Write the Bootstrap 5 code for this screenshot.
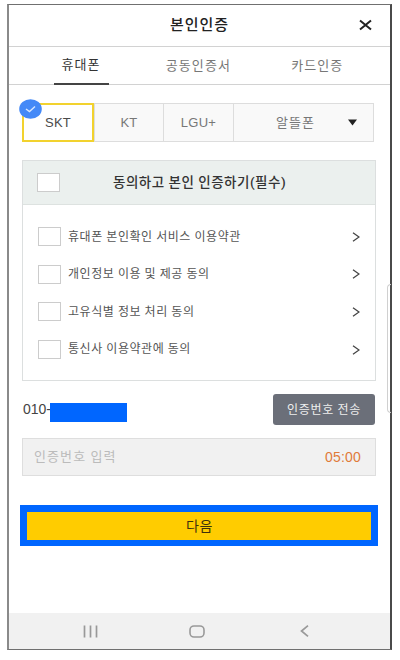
<!DOCTYPE html>
<html lang="ko">
<head>
<meta charset="utf-8">
<meta name="viewport" content="width=device-width, initial-scale=1">
<title>본인인증</title>
<link href="https://cdn.jsdelivr.net/npm/bootstrap@5.3.0/dist/css/bootstrap.min.css" rel="stylesheet">
<style>
body{background:#fff;font-family:Roboto,"Noto Sans CJK KR",sans-serif;color:#333;line-height:1.2;overflow:hidden}
svg{display:block;flex:none}
.phone{width:385px;height:646px;margin:4px 0 0 7px;border:1px solid #707070;border-left:2px solid #8a8a8a;border-right:2px solid #4a4a4a}
.topbar{height:42px;border-bottom:1px solid #d2d2d2}
.topbar h1{font-size:15px;font-weight:500;letter-spacing:.95px;color:#222;padding-bottom:1px}
.close-btn{right:18px;top:14px}
.tabs{height:38px;border-bottom:1px solid #d2d2d2;font-size:13px;letter-spacing:1.1px;color:#777;padding-left:16px;padding-right:18px}
.tabs .nav-link{color:#777;padding:0}
.tabs .nav-link.active{color:#333}
.tabs .nav-link.active span{width:55px;height:38px;border-bottom:2px solid #444}
.tabs .nav-link:nth-child(2){padding-right:3px}
.carriers{height:39px;margin:18px 16px 0 13px;border:1px solid #ddd;background:#f9f9f9;color:#777;font-family:"Liberation Sans","Noto Sans CJK KR",sans-serif;font-size:13px;letter-spacing:.3px}
.carrier+.carrier{border-left:1px solid #ddd}
.carrier.chosen{width:72px;flex:none;margin:-1px 0 -1px -1px;border:2px solid #f2d22e;background:#fff;color:#4a4a4a}
.tick{left:-5px;top:-6px}
.dealer{letter-spacing:1.1px;margin-left:42px}
.terms{margin:18px 14px 0 13px;height:221px;border:1px solid #dcdfdf}
.terms-head{height:44px;background:#ebf0ee;border-bottom:1px solid #dde2e0;padding-left:14px}
.terms-head label{font-size:13.5px;font-weight:500;color:#333;letter-spacing:.5px;margin-left:53px}
.box{width:23px;height:19px;border:1px solid #ccc;background:#fff;flex:none}
.terms-list{padding:13px 15px 0}
.term{height:37.6px;font-size:12px;letter-spacing:.55px;color:#555}
.term label{margin-left:7px}
.verify{height:31px;margin:13px 15px 0 14px}
.number{width:27px;font-family:"Liberation Sans",sans-serif;font-size:14px;color:#444}
.mask{width:77px;height:19px;background:#06f;margin-top:6px}
.send{width:102px;height:31px;border-radius:3px;background:#6b6f79;color:#eee;font-size:12px;letter-spacing:.7px}
.code{height:38px;margin:13px 14px 0 13px;padding:0 14px 0 11px;border:1px solid #dedede;background:#f1f1f1;font-size:13px;letter-spacing:1.1px;color:#bbb}
.timer{color:#e07b39;font-family:"Liberation Sans",sans-serif;font-size:14px;letter-spacing:.2px;padding-top:1px}
.next{width:358px;height:41px;margin:29px 0 0 11px;border:7px solid #06f!important;border-bottom-width:6px!important;background:#fc0;color:#3d300d;font-size:14px;letter-spacing:.6px}
.next span{padding-left:1px}
.sysbar{height:36px;background:#f1f1f1;padding-left:74px;padding-right:81px}
.edge{left:387px;top:284px;width:4px;height:129px;border:1px solid #d0d0d0;border-right:0;border-radius:5px 0 0 5px}
</style>
<script src="https://cdn.jsdelivr.net/npm/bootstrap@5.3.0/dist/js/bootstrap.bundle.min.js"></script>
</head>
<body>
<main class="phone d-flex flex-column">
  <header class="topbar position-relative d-flex align-items-center justify-content-center">
    <h1 class="m-0">본인인증</h1>
    <svg class="close-btn position-absolute" width="13" height="12" viewBox="0 0 13 12" fill="none" stroke="#222" stroke-width="2"><path d="M1 1.5 12 10.5M12 1.5 1 10.5"/></svg>
  </header>
  <nav class="tabs nav flex-nowrap nav-fill">
    <a class="nav-link active d-flex justify-content-center"><span class="d-flex align-items-center justify-content-center">휴대폰</span></a>
    <a class="nav-link d-flex align-items-center justify-content-center">공동인증서</a>
    <a class="nav-link d-flex align-items-center justify-content-center">카드인증</a>
  </nav>
  <div class="carriers d-flex">
    <div class="carrier chosen position-relative d-flex align-items-center justify-content-center">SKT
      <svg class="tick position-absolute" width="23" height="20" viewBox="0 0 23 20"><ellipse cx="11.5" cy="10" rx="11.3" ry="9.8" fill="#4489f7"/><path d="m7 10 3.5 2.6 5.5-5" fill="none" stroke="#d8e7ff" stroke-width="1.4"/></svg>
    </div>
    <div class="carrier d-flex align-items-center justify-content-center" style="width:69px">KT</div>
    <div class="carrier d-flex align-items-center justify-content-center" style="width:70px">LGU+</div>
    <div class="carrier d-flex flex-fill align-items-center justify-content-between pe-3"><span class="dealer">알뜰폰</span>
      <svg width="9" height="7" viewBox="0 0 9 7"><path d="M0 .5h9L4.500 6.500z" fill="#222"/></svg>
    </div>
  </div>
  <section class="terms">
    <div class="terms-head d-flex align-items-center"><span class="box"></span><label>동의하고 본인 인증하기(필수)</label></div>
    <div class="terms-list">
      <div class="term d-flex align-items-center"><span class="box"></span><label class="me-auto">휴대폰 본인확인 서비스 이용약관</label><svg width="8" height="10" viewBox="0 0 8 10" fill="none" stroke="#444" stroke-width="1.3"><path d="m1 .7 6 4.300-6 4.300"/></svg></div>
      <div class="term d-flex align-items-center"><span class="box"></span><label class="me-auto">개인정보 이용 및 제공 동의</label><svg width="8" height="10" viewBox="0 0 8 10" fill="none" stroke="#444" stroke-width="1.3"><path d="m1 .7 6 4.300-6 4.300"/></svg></div>
      <div class="term d-flex align-items-center"><span class="box"></span><label class="me-auto">고유식별 정보 처리 동의</label><svg width="8" height="10" viewBox="0 0 8 10" fill="none" stroke="#444" stroke-width="1.3"><path d="m1 .7 6 4.300-6 4.300"/></svg></div>
      <div class="term d-flex align-items-center"><span class="box"></span><label class="me-auto">통신사 이용약관에 동의</label><svg width="8" height="10" viewBox="0 0 8 10" fill="none" stroke="#444" stroke-width="1.3"><path d="m1 .7 6 4.300-6 4.300"/></svg></div>
    </div>
  </section>
  <div class="verify d-flex align-items-center">
    <span class="number text-nowrap">010-</span><span class="mask position-relative"></span>
    <button class="send btn p-0 border-0 ms-auto">인증번호 전송</button>
  </div>
  <div class="code d-flex align-items-center justify-content-between"><span>인증번호 입력</span><span class="timer">05:00</span></div>
  <button class="next btn rounded-0 p-0"><span>다음</span></button>
  <footer class="sysbar d-flex align-items-center justify-content-between mt-auto">
    <svg width="15" height="13" viewBox="0 0 15 13" stroke="#999" stroke-width="1.7"><path d="M1.500.5v12M7.500.5v12M13.500.5v12"/></svg>
    <svg class="me-1" width="16" height="13" viewBox="0 0 16 13" fill="none" stroke="#999" stroke-width="1.6"><rect x="1" y="1" width="14" height="11" rx="4"/></svg>
    <svg width="9" height="12" viewBox="0 0 9 12" fill="none" stroke="#999" stroke-width="1.7"><path d="M8 .7 1.500 6 8 11.300"/></svg>
  </footer>
</main>
<div class="edge position-absolute"></div>
</body>
</html>
